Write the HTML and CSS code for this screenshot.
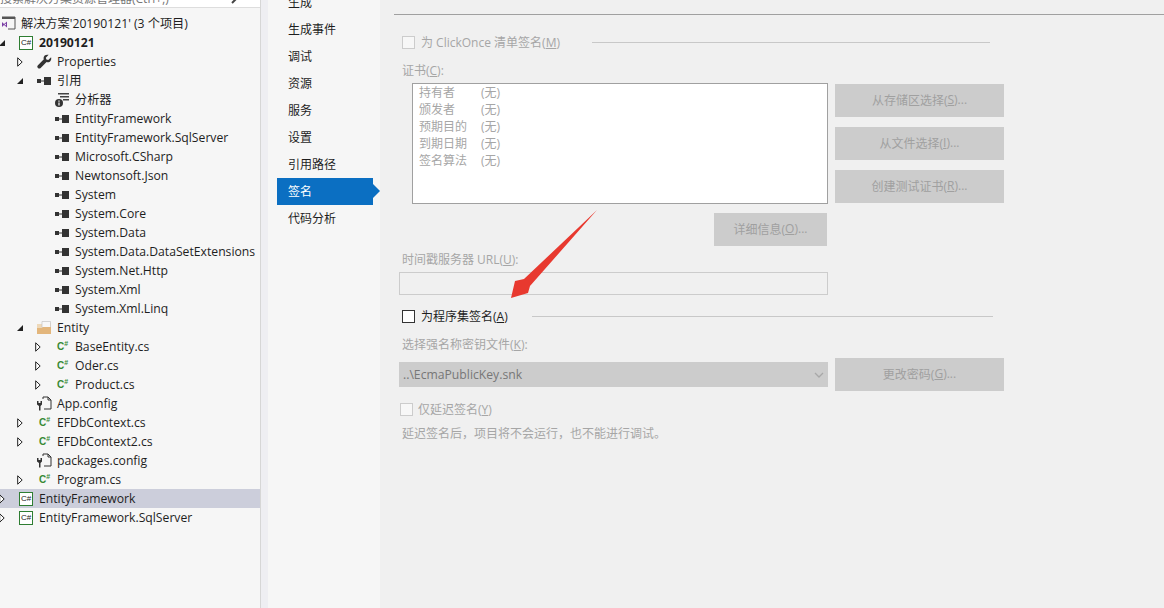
FILE: index.html
```html
<!DOCTYPE html>
<html>
    <head>
        <meta charset="utf-8">
        <title>签名</title>
        <link rel="stylesheet" href="styles.css">
    </head>
    <body>
        <svg class="defs" width="0" height="0">
            <symbol id="open" viewBox="0 0 6 6"><path d="M6 0v6H0z"/></symbol>
            <symbol id="closed" viewBox="0 0 6 10"><path d="M.7.8l4.500 4.200L.7 9.200z" fill="#fff" stroke="#222"/></symbol>
            <symbol id="ref" viewBox="0 0 15 10"><path d="M0 3h4v4H0zM4 4.500h3v1H4zM7 1h7v8H7z" fill="#333"/></symbol>
            <symbol id="wrench" viewBox="0 0 16 16"><path d="M15 3.500l-3 3-2-.6-.6-2 3-3C9.800.2 7 1.500 7 4.200c0 .6.1 1 .3 1.500L1 12c-1 1-.9 2 0 2.900s2 .9 2.900 0l6.300-6.300c3 1.200 5.800-1.600 4.800-5.100z" fill="#333"/></symbol>
            <symbol id="analyzer" viewBox="0 0 14 14"><path d="M3 0h11v1.500H3zM5 3h9v1.500H5zM8 6h6v1.500H8z" fill="#444"/><circle cx="4" cy="10" r="4" fill="#333"/><path d="M3.400 7.500h1.200v1.200H3.400zM3.400 9.500h1.200v3H3.400z" fill="#fff"/></symbol>
            <symbol id="folder" viewBox="0 0 14 13"><path d="M0 3h5l1-1h8v11H0z" fill="#eed9ba"/><path d="M5 .5h8.500v6H5z" fill="#f8f8f8" stroke="#c4c4c4" stroke-width=".7"/><path d="M0 7h5l1-1h8v7H0z" fill="#e3b67c"/></symbol>
            <symbol id="config" viewBox="0 0 15 15"><path d="M6 3V1h5l3 3v9H7" fill="none" stroke="#333"/><path d="M11 1v3h3" fill="none" stroke="#333"/><path d="M0 5h1.500v2h2V5H5v3.500L3.500 10v4.500H2V10L0 8.500z" fill="#333"/></symbol>
            <symbol id="solution" viewBox="0 0 15 15"><path d="M1 1h13v12H7" fill="none" stroke="#555"/><path d="M1 1h13v2H1z" fill="#555"/><path d="M1 6l2 2 3-2.500v6L3 9l-2 2zM3.500 8.500L5 9.500v-2z" fill="#7a3fa5"/></symbol>
            <symbol id="chevron" viewBox="0 0 10 6"><path d="M1 1l4 4 4-4" fill="none" stroke="#a8a8a8" stroke-width="1.300"/></symbol>
        </svg>

        <div class="tree">
            <div class="search">
                <span>搜索解决方案资源管理器(Ctrl+;)</span>
                <svg class="search-icon" width="12" height="12" viewBox="0 0 12 12"><path d="M2 10l4-4" stroke="#444" stroke-width="2"/></svg>
            </div>

            <div class="row l0"><span class="icon"><svg width="15" height="15"><use href="#solution"/></svg></span><span class="cjk">解决方案'20190121' (3 个项目)</span></div>
            <div class="row l1 bold"><svg class="arrow" width="6" height="6"><use href="#open"/></svg><span class="icon"><span class="cs-box">C#</span></span>20190121</div>
            <div class="row l2"><svg class="arrow" width="6" height="10"><use href="#closed"/></svg><span class="icon"><svg width="15" height="15"><use href="#wrench"/></svg></span>Properties</div>
            <div class="row l2"><svg class="arrow" width="6" height="6"><use href="#open"/></svg><span class="icon"><svg width="15" height="10"><use href="#ref"/></svg></span><span class="cjk">引用</span></div>
            <div class="row l3 leaf"><span class="icon"><svg width="14" height="14"><use href="#analyzer"/></svg></span><span class="cjk">分析器</span></div>
            <div class="row l3 leaf"><span class="icon"><svg width="15" height="10"><use href="#ref"/></svg></span>EntityFramework</div>
            <div class="row l3 leaf"><span class="icon"><svg width="15" height="10"><use href="#ref"/></svg></span>EntityFramework.SqlServer</div>
            <div class="row l3 leaf"><span class="icon"><svg width="15" height="10"><use href="#ref"/></svg></span>Microsoft.CSharp</div>
            <div class="row l3 leaf"><span class="icon"><svg width="15" height="10"><use href="#ref"/></svg></span>Newtonsoft.Json</div>
            <div class="row l3 leaf"><span class="icon"><svg width="15" height="10"><use href="#ref"/></svg></span>System</div>
            <div class="row l3 leaf"><span class="icon"><svg width="15" height="10"><use href="#ref"/></svg></span>System.Core</div>
            <div class="row l3 leaf"><span class="icon"><svg width="15" height="10"><use href="#ref"/></svg></span>System.Data</div>
            <div class="row l3 leaf"><span class="icon"><svg width="15" height="10"><use href="#ref"/></svg></span>System.Data.DataSetExtensions</div>
            <div class="row l3 leaf"><span class="icon"><svg width="15" height="10"><use href="#ref"/></svg></span>System.Net.Http</div>
            <div class="row l3 leaf"><span class="icon"><svg width="15" height="10"><use href="#ref"/></svg></span>System.Xml</div>
            <div class="row l3 leaf"><span class="icon"><svg width="15" height="10"><use href="#ref"/></svg></span>System.Xml.Linq</div>
            <div class="row l2"><svg class="arrow" width="6" height="6"><use href="#open"/></svg><span class="icon"><svg width="14" height="13"><use href="#folder"/></svg></span>Entity</div>
            <div class="row l3"><svg class="arrow" width="6" height="10"><use href="#closed"/></svg><span class="icon"><span class="cs">C<sup>#</sup></span></span>BaseEntity.cs</div>
            <div class="row l3"><svg class="arrow" width="6" height="10"><use href="#closed"/></svg><span class="icon"><span class="cs">C<sup>#</sup></span></span>Oder.cs</div>
            <div class="row l3"><svg class="arrow" width="6" height="10"><use href="#closed"/></svg><span class="icon"><span class="cs">C<sup>#</sup></span></span>Product.cs</div>
            <div class="row l2 leaf"><span class="icon"><svg width="15" height="15"><use href="#config"/></svg></span>App.config</div>
            <div class="row l2"><svg class="arrow" width="6" height="10"><use href="#closed"/></svg><span class="icon"><span class="cs">C<sup>#</sup></span></span>EFDbContext.cs</div>
            <div class="row l2"><svg class="arrow" width="6" height="10"><use href="#closed"/></svg><span class="icon"><span class="cs">C<sup>#</sup></span></span>EFDbContext2.cs</div>
            <div class="row l2 leaf"><span class="icon"><svg width="15" height="15"><use href="#config"/></svg></span>packages.config</div>
            <div class="row l2"><svg class="arrow" width="6" height="10"><use href="#closed"/></svg><span class="icon"><span class="cs">C<sup>#</sup></span></span>Program.cs</div>
            <div class="row l1 selected"><svg class="arrow" width="6" height="10"><use href="#closed"/></svg><span class="icon"><span class="cs-box">C#</span></span>EntityFramework</div>
            <div class="row l1"><svg class="arrow" width="6" height="10"><use href="#closed"/></svg><span class="icon"><span class="cs-box">C#</span></span>EntityFramework.SqlServer</div>
        </div>

        <div class="gutter"></div>

        <ul class="nav">
            <li>生成</li>
            <li>生成事件</li>
            <li>调试</li>
            <li>资源</li>
            <li>服务</li>
            <li>设置</li>
            <li>引用路径</li>
            <li class="active">签名</li>
            <li>代码分析</li>
        </ul>

        <div class="main">
            <div class="top-rule"></div>

            <div class="form">
                <div class="section off first">
                    <span class="check"></span>
                    <span class="text">为 ClickOnce 清单签名(<u>M</u>)</span>
                    <span class="rule r1"></span>
                </div>

                <div class="label off cert-label">证书(<u>C</u>):</div>
                <div class="cert">
                    <div class="cert-box">
                        <div class="cert-row"><span>持有者</span><span>(无)</span></div>
                        <div class="cert-row"><span>颁发者</span><span>(无)</span></div>
                        <div class="cert-row"><span>预期目的</span><span>(无)</span></div>
                        <div class="cert-row"><span>到期日期</span><span>(无)</span></div>
                        <div class="cert-row"><span>签名算法</span><span>(无)</span></div>
                    </div>
                    <div class="cert-buttons">
                        <div class="btn wide">从存储区选择(<u>S</u>)...</div>
                        <div class="btn wide">从文件选择(<u>I</u>)...</div>
                        <div class="btn wide">创建测试证书(<u>R</u>)...</div>
                    </div>
                </div>
                <div class="details"><div class="btn narrow">详细信息(<u>O</u>)...</div></div>

                <div class="label off url-label">时间戳服务器 URL(<u>U</u>):</div>
                <div class="input"></div>

                <div class="section second">
                    <span class="check on"></span>
                    <span class="text">为程序集签名(<u>A</u>)</span>
                    <span class="rule r2"></span>
                </div>

                <div class="label off key-label">选择强名称密钥文件(<u>K</u>):</div>
                <div class="key">
                    <div class="select">
                        <span>..\EcmaPublicKey.snk</span>
                        <svg width="10" height="6"><use href="#chevron"/></svg>
                    </div>
                    <div class="btn wide">更改密码(<u>G</u>)...</div>
                </div>

                <div class="section off delay">
                    <span class="check"></span>
                    <span class="text">仅延迟签名(<u>Y</u>)</span>
                </div>
                <div class="label off hint">延迟签名后，项目将不会运行，也不能进行调试。</div>
            </div>

            <svg class="pointer" width="100" height="100" viewBox="0 0 100 100"><path d="M87 0L14 69 5 71 1 88 18 83 20 76z" fill="#e8392f"/></svg>
        </div>
    </body>
</html>
```

FILE: styles.css
```css
html, body {
    margin: 0;
    padding: 0;
    height: 100%;
    overflow: hidden;
}

body {
    display: flex;
    background: #f0f0f0;
    font-family: "Open Sans", "Noto Sans CJK SC", sans-serif;
    font-size: 12.2px;
    color: #1e1e1e;
}

.defs {
    position: absolute;
}

/* solution tree */
.tree {
    width: 260px;
    flex: none;
    background: #f6f6f6;
}

.search {
    display: flex;
    justify-content: space-between;
    align-items: flex-end;
    height: 8px;
    padding-right: 18px;
    margin-bottom: 6px;
    overflow: hidden;
    background: #fff;
    border-bottom: 1px solid #ddd;
    box-sizing: border-box;
    font-size: 12px;
    line-height: 16px;
    color: #777;
}

.search-icon {
    margin-bottom: 2px;
}

.row {
    display: flex;
    align-items: center;
    height: 19px;
    white-space: nowrap;
}

.l0 { padding-left: 1px; }
.l1 { padding-left: 0; }
.l2 { padding-left: 18px; }
.l3 { padding-left: 36px; }
.leaf { padding-left: 55px; }
.l2.leaf { padding-left: 37px; }

.arrow {
    flex: none;
    fill: #222;
    margin: 0 14px 0 -1px;
}

.icon {
    display: flex;
    align-items: center;
    width: 20px;
    flex: none;
}

.cjk {
    margin-bottom: 2px;
}

.bold {
    font-weight: 700;
}

.selected {
    background: #cccedb;
}

.cs-box {
    display: block;
    width: 12px;
    height: 12px;
    border: 1px solid #2e7d32;
    background: #fff;
    font: 8px/12px "Liberation Sans", sans-serif;
    text-align: center;
    color: #222;
}

.cs {
    margin-left: 2px;
    font: bold 10px/12px "Liberation Sans", sans-serif;
    color: #388a34;
}

.cs sup {
    font-size: 7px;
    line-height: 0;
}

.gutter {
    width: 8px;
    flex: none;
    background: #eeeef2;
    border-left: 1px solid #d6d6d6;
    box-sizing: border-box;
}

/* property page tabs */
.nav {
    width: 112px;
    flex: none;
    margin: -11px 0 0;
    padding: 0;
    list-style: none;
    background: #f6f6f6;
    font: 12px/25px "Noto Sans CJK SC", sans-serif;
}

.nav li {
    position: relative;
    height: 27px;
    width: 85px;
    margin-left: 9px;
    padding-left: 11px;
}

.nav .active {
    background: #0b6fc2;
    color: #fff;
}

.nav .active:after {
    content: "";
    position: absolute;
    left: 96px;
    top: 6px;
    border-left: 7px solid #0b6fc2;
    border-top: 7px solid transparent;
    border-bottom: 7px solid transparent;
}

/* signing form */
.main {
    position: relative;
    flex: 1;
    min-width: 0;
    font-family: "Open Sans", "Noto Sans CJK SC", sans-serif;
    font-size: 12px;
}

.top-rule {
    height: 1px;
    margin: 14px 0 0 14px;
    background: #a0a0a0;
}

.form {
    width: 605px;
    margin-left: 19px;
}

.off {
    color: #a6a6a6;
}

.off u {
    text-decoration-color: #a6a6a6;
}

.section {
    display: flex;
    align-items: center;
    height: 20px;
    padding-left: 3px;
    white-space: nowrap;
}

.first { margin-top: 17px; }
.second { margin-top: 11px; }
.delay { margin-top: 8px; padding-left: 1px; }
.delay .check { margin-right: 5px; }

.check {
    flex: none;
    width: 11px;
    height: 11px;
    margin-right: 6px;
    border: 1px solid #ccc;
    background: #f7f7f7;
}

.check.on {
    border-color: #333;
    background: #fff;
}

.text {
    margin-bottom: 1px;
}

.rule {
    height: 1px;
    margin-top: 1px;
    background: #c8c8c8;
}

.r1 { width: 398px; margin-left: 32px; }
.r2 { width: 461px; margin-left: 24px; }

.label {
    height: 16px;
    line-height: 18px;
    padding-left: 3px;
}

.cert-label { margin-top: 10px; }
.url-label { margin-top: 5px; }
.key-label { margin-top: 10px; }
.hint { margin-top: 6px; }

.cert {
    display: flex;
    margin-top: 5px;
}

.cert-box {
    width: 414px;
    height: 119px;
    margin-left: 13px;
    background: #fff;
    border: 1px solid #a0a0a0;
    color: #a6a6a6;
}

.cert-row {
    display: flex;
    height: 17px;
    line-height: 17px;
    padding-left: 6px;
}

.cert-row span:first-child {
    width: 62px;
}

.cert-buttons {
    display: flex;
    flex-direction: column;
    gap: 10px;
    margin: 1px 0 0 7px;
}

.btn {
    display: flex;
    align-items: center;
    justify-content: center;
    height: 33px;
    padding-bottom: 2px;
    box-sizing: border-box;
    background: #ccc;
    color: #a0a0a0;
    white-space: nowrap;
}

.wide { width: 169px; }
.narrow { width: 113px; }

.details {
    display: flex;
    justify-content: flex-end;
    width: 428px;
    margin-top: 9px;
}

.input {
    width: 427px;
    height: 21px;
    margin-top: 5px;
    border: 1px solid #ccc;
    background: #f0f0f0;
}

.key {
    display: flex;
    align-items: center;
    gap: 7px;
    margin-top: 6px;
}

.select {
    display: flex;
    align-items: center;
    justify-content: space-between;
    width: 429px;
    height: 25px;
    padding: 0 4px;
    box-sizing: border-box;
    background: #ccc;
    font-size: 12.2px;
    color: #777;
}

.pointer {
    position: absolute;
    left: 130px;
    top: 210px;
}
```
